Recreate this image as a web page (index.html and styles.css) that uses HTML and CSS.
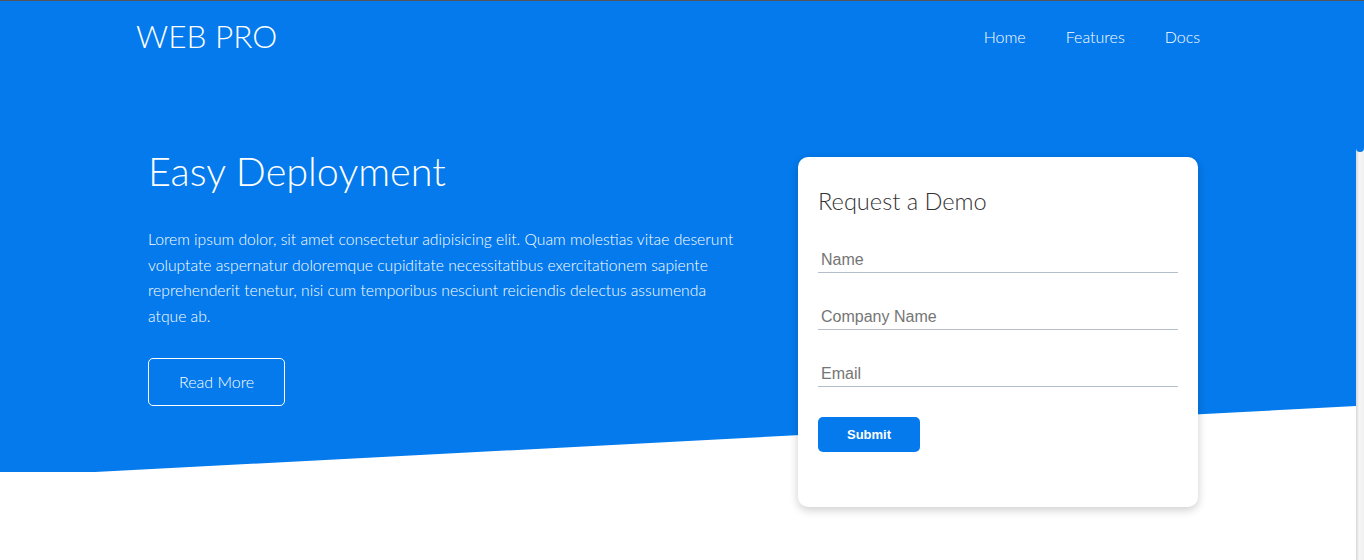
FILE: index.html
```html
<!DOCTYPE html>
<html lang="en">
<head>
<meta charset="utf-8">
<title>Web Pro</title>
<link rel="stylesheet" href="styles.css">
</head>
<body>
<div class="page">
  <header class="hero">
    <nav class="navbar">
      <div class="nav-inner">
        <h1 class="logo">WEB PRO</h1>
        <ul class="nav-links">
          <li><a href="#">Home</a></li>
          <li><a href="#">Features</a></li>
          <li><a href="#">Docs</a></li>
        </ul>
      </div>
    </nav>
    <div class="hero-inner">
      <div class="hero-text">
        <h2 class="hero-title">Easy Deployment</h2>
        <p class="hero-copy">Lorem ipsum dolor, sit amet consectetur adipisicing elit. Quam molestias vitae deserunt voluptate aspernatur doloremque cupiditate necessitatibus exercitationem sapiente reprehenderit tenetur, nisi cum temporibus nesciunt reiciendis delectus assumenda atque ab.</p>
        <a href="#" class="btn-outline">Read More</a>
      </div>
      <div class="demo-card">
        <h3 class="demo-title">Request a Demo</h3>
        <form class="demo-form">
          <input class="field" type="text" placeholder="Name">
          <input class="field" type="text" placeholder="Company Name">
          <input class="field" type="email" placeholder="Email">
          <button class="btn-submit" type="button">Submit</button>
        </form>
      </div>
    </div>
  </header>
</div>
<div class="scrollbar" aria-hidden="true"><div class="scrollbar-thumb"></div></div>
</body>
</html>
```
FILE: styles.css
```css
* {
  box-sizing: border-box;
}

body {
  margin: 0;
  border-top: 1px solid #555;
  font-family: "Lato", "Liberation Sans", sans-serif;
  font-weight: 300;
  line-height: 1.6;
  color: #333;
  background: #fff;
  overflow: hidden;
}

.page {
  margin-right: 8px;
  height: 559px;
}

.scrollbar {
  position: fixed;
  top: 1px;
  right: 0;
  bottom: 0;
  width: 8px;
  background: linear-gradient(to right, #d8d8d8, #f6f6f6 40%, #f0f0f0);
}

.scrollbar-thumb {
  height: 151px;
  background: #047aed;
  border-radius: 0 0 4px 4px;
}

.hero {
  position: relative;
  height: 471px;
  color: #fff;
}

.hero::before {
  content: "";
  position: absolute;
  inset: 0;
  background: #047aed;
  clip-path: polygon(0 0, 100% 0, 100% 405px, 95px 100%, 0 100%);
}

.navbar,
.hero-inner {
  position: relative;
  z-index: 1;
}

.nav-inner {
  max-width: 1100px;
  height: 72px;
  margin: 0 auto;
  padding: 0 8px;
  display: flex;
  align-items: center;
  justify-content: space-between;
}

.logo {
  margin: 0;
  font-size: 31.6px;
  font-weight: 300;
  line-height: 1;
}

.nav-links {
  display: flex;
  list-style: none;
  margin: 0;
  padding: 0;
}

.nav-links a {
  display: block;
  padding: 0 20px;
  color: #fff;
  text-decoration: none;
  font-size: 16px;
  font-weight: 300;
}

.hero-inner {
  max-width: 1100px;
  margin: 0 auto;
  padding: 74px 30px 0 20px;
  display: flex;
  justify-content: space-between;
  align-items: flex-start;
}

.hero-text {
  width: 600px;
}

.hero-title {
  margin: 0;
  font-size: 39.6px;
  font-weight: 300;
  line-height: 48px;
}

.hero-copy {
  margin: 32px 0 29px;
  font-size: 15.7px;
  line-height: 25.6px;
}

.btn-outline {
  display: inline-block;
  padding: 10px 30px;
  border: 1px solid #fff;
  border-radius: 5px;
  color: #fff;
  text-decoration: none;
  font-size: 16px;
  line-height: 1.6;
}

.demo-card {
  width: 400px;
  height: 350px;
  margin-top: 10px;
  padding: 30px 20px;
  background: #fff;
  color: #333;
  border-radius: 10px;
  box-shadow: 0 3px 10px rgba(0, 0, 0, 0.2);
}

.demo-title {
  margin: 0;
  font-size: 23.6px;
  font-weight: 300;
  line-height: 29px;
}

.demo-form {
  display: flex;
  flex-direction: column;
  align-items: flex-start;
}

.field {
  display: block;
  width: 100%;
  height: 25px;
  margin-top: 32px;
  padding: 3px;
  border: 0;
  border-bottom: 1px solid #b4becb;
  font-family: "Liberation Sans", Arial, sans-serif;
  font-size: 16px;
  color: #333;
  outline: none;
}

.field::placeholder {
  color: #757575;
}

.btn-submit {
  width: 102px;
  height: 35px;
  margin-top: 30px;
  border: 0;
  border-radius: 5px;
  background: #047aed;
  color: #fff;
  font-family: "Liberation Sans", Arial, sans-serif;
  font-size: 13px;
  font-weight: 700;
  cursor: pointer;
}
```
